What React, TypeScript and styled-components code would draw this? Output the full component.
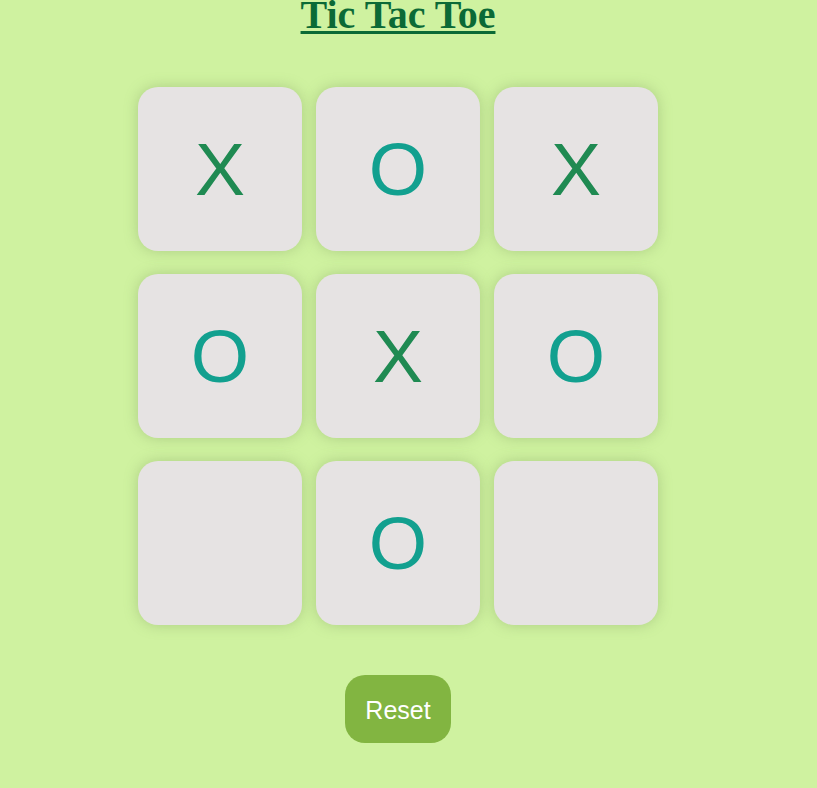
import React, { useState } from "react";
import styled, { createGlobalStyle } from "styled-components";

const GlobalStyle = createGlobalStyle`
  html, body { margin: 0; padding: 0; background: #cff2a0; }
  body { font-family: "Liberation Sans", Arial, sans-serif; }
`;

const Page = styled.div`
  width: 796px;
  display: flex;
  flex-direction: column;
  align-items: center;
`;

const Title = styled.h1`
  margin: 0;
  font-family: "Liberation Serif", "Times New Roman", serif;
  font-size: 40px;
  line-height: 29px;
  font-weight: bold;
  color: #0b6a36;
  text-decoration: underline;
  text-decoration-thickness: 3px;
  text-underline-offset: 3px;
`;

const Board = styled.div`
  margin-top: 58px;
  display: grid;
  grid-template-columns: repeat(3, 164px);
  grid-auto-rows: 164px;
  column-gap: 14px;
  row-gap: 23px;
`;

const Cell = styled.div<{ $mark: string }>`
  background: #e6e3e3;
  border-radius: 20px;
  box-shadow: 0 0 14px rgba(120, 150, 90, 0.4);
  display: flex;
  align-items: center;
  justify-content: center;
  font-family: "Liberation Sans", Arial, sans-serif;
  font-size: 75px;
  color: ${(p) => (p.$mark === "X" ? "#1f8a52" : "#12a08f")};
  cursor: pointer;
  user-select: none;
`;

const ResetButton = styled.button`
  margin-top: 50px;
  width: 106px;
  height: 68px;
  border: none;
  border-radius: 20px;
  background: #82b541;
  color: #ffffff;
  font-family: "Liberation Sans", Arial, sans-serif;
  font-size: 25px;
  padding: 2px 0 0;
  cursor: pointer;
`;

const initial = ["X", "O", "X", "O", "X", "O", "", "O", ""];

export default function App() {
  const [cells, setCells] = useState<string[]>(initial);
  return (
    <>
      <GlobalStyle />
      <Page>
        <Title>Tic Tac Toe</Title>
        <Board>
          {cells.map((m, i) => (
            <Cell key={i} $mark={m}>
              {m}
            </Cell>
          ))}
        </Board>
        <ResetButton onClick={() => setCells(Array(9).fill(""))}>Reset</ResetButton>
      </Page>
    </>
  );
}
